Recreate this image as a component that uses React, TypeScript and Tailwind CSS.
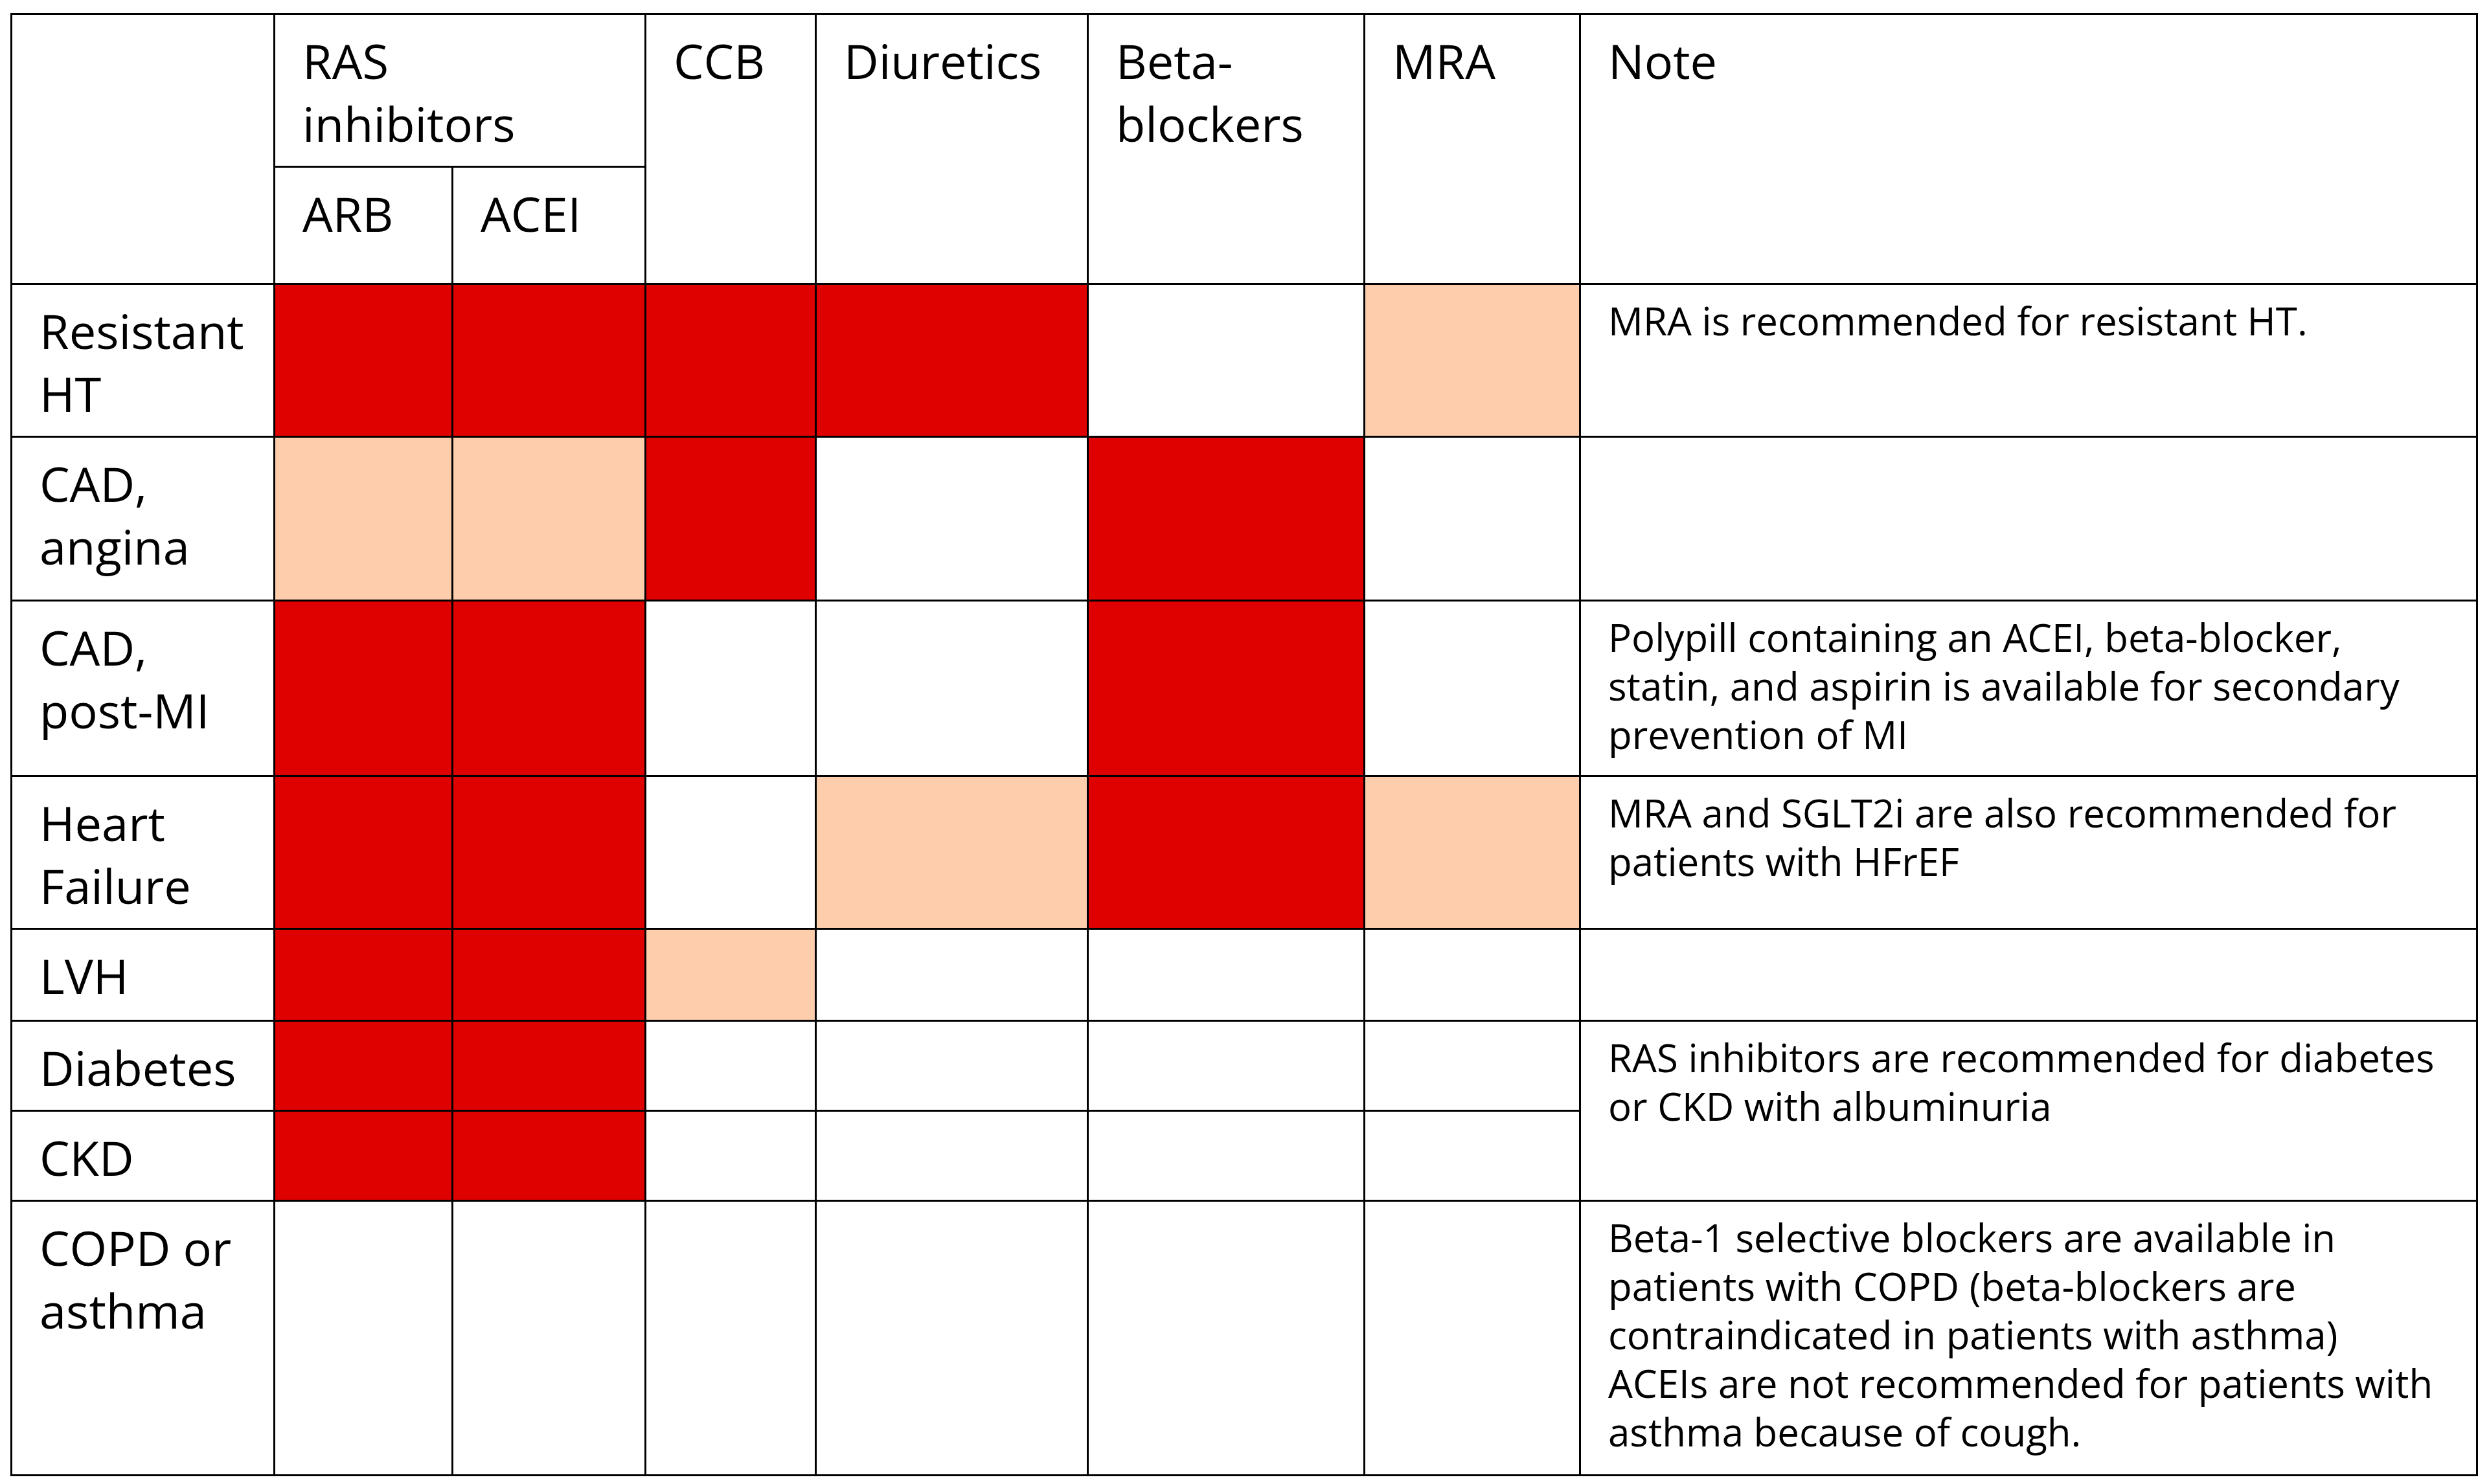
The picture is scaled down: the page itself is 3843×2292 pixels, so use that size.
import React from 'react'

type Fill = 'r' | 'p' | ''

const rows: { label: React.ReactNode; cells: Fill[]; note?: React.ReactNode; noteSpan?: boolean; noNote?: boolean }[] = [
  {
    label: <>Resistant<br />HT</>,
    cells: ['r', 'r', 'r', 'r', '', 'p'],
    note: <>MRA is recommended for resistant HT.</>,
  },
  { label: <>CAD,<br />angina</>, cells: ['p', 'p', 'r', '', 'r', ''], note: null },
  {
    label: <>CAD,<br />post-MI</>,
    cells: ['r', 'r', '', '', 'r', ''],
    note: (
      <>
        Polypill containing an ACEI, beta-blocker,<br />
        statin, and aspirin is available for secondary<br />
        prevention of MI
      </>
    ),
  },
  {
    label: <>Heart<br />Failure</>,
    cells: ['r', 'r', '', 'p', 'r', 'p'],
    note: (
      <>
        MRA and SGLT2i are also recommended for<br />
        patients with HFrEF
      </>
    ),
  },
  { label: <>LVH</>, cells: ['r', 'r', 'p', '', '', ''], note: null },
  {
    label: <>Diabetes</>,
    cells: ['r', 'r', '', '', '', ''],
    noteSpan: true,
    note: (
      <>
        RAS inhibitors are recommended for diabetes<br />
        or CKD with albuminuria
      </>
    ),
  },
  { label: <>CKD</>, cells: ['r', 'r', '', '', '', ''], noNote: true },
  {
    label: <>COPD or<br />asthma</>,
    cells: ['', '', '', '', '', ''],
    note: (
      <>
        Beta-1 selective blockers are available in<br />
        patients with COPD (beta-blockers are<br />
        contraindicated in patients with asthma)<br />
        ACEIs are not recommended for patients with<br />
        asthma because of cough.
      </>
    ),
  },
]

const fillClass = (f: Fill) =>
  f === 'r' ? 'bg-[#df0000]' : f === 'p' ? 'bg-[#fecdab]' : 'bg-white'

const Head = ({ children, className = '' }: { children?: React.ReactNode; className?: string }) => (
  <div className={`bg-white pl-[42px] pt-[22px] text-[74px] leading-[97px] ${className}`}>{children}</div>
)

const App = () => {
  return (
    <div className="min-h-screen bg-white pl-[16px] pt-[20px] font-['Open_Sans'] text-black">
      <div className="grid w-fit grid-cols-[403px_272px_295px_260px_417px_424px_330px_1382px] grid-rows-[233px_178px_233px_250px_268px_233px_139px_136px_136px_421px] gap-[3px] bg-black p-[3px]">
        {/* header */}
        <Head className="row-span-2" />
        <Head className="col-span-2">
          RAS
          <br />
          inhibitors
        </Head>
        <Head className="row-span-2">CCB</Head>
        <Head className="row-span-2">Diuretics</Head>
        <Head className="row-span-2">
          Beta-
          <br />
          blockers
        </Head>
        <Head className="row-span-2">MRA</Head>
        <Head className="row-span-2">Note</Head>
        <Head>ARB</Head>
        <Head>ACEI</Head>

        {/* body */}
        {rows.map((row, i) => (
          <React.Fragment key={i}>
            <Head>{row.label}</Head>
            {row.cells.map((c, j) => (
              <div key={j} className={fillClass(c)} />
            ))}
            {!row.noNote && (
              <div
                className={`bg-white pl-[42px] pt-[18px] text-[60px] leading-[75px] ${row.noteSpan ? 'row-span-2' : ''}`}
              >
                {row.note}
              </div>
            )}
          </React.Fragment>
        ))}
      </div>
    </div>
  )
}

export default App
